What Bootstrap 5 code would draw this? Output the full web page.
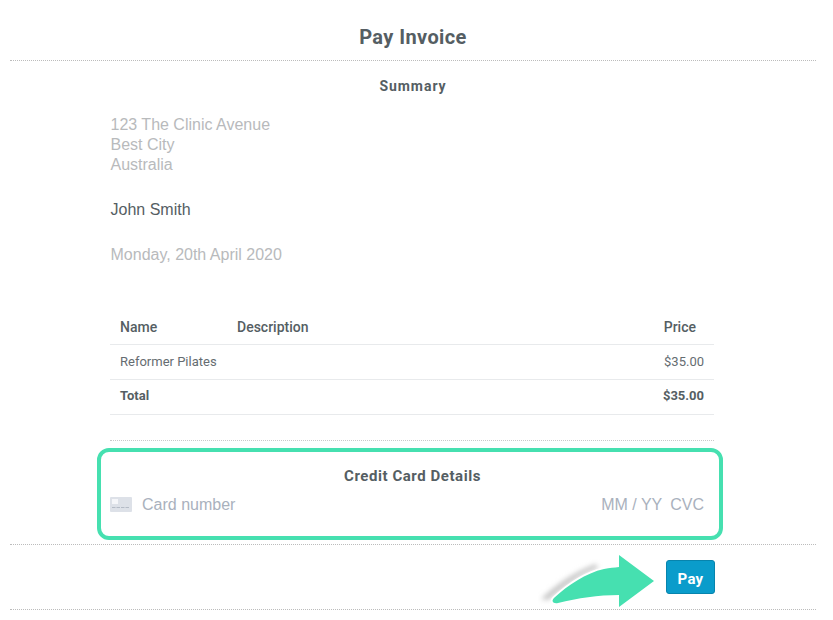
<!DOCTYPE html>
<html lang="en">
<head>
<meta charset="utf-8">
<title>Pay Invoice</title>
<link href="https://cdn.jsdelivr.net/npm/bootstrap@5.3.0/dist/css/bootstrap.min.css" rel="stylesheet">
<style>
html,body{height:620px;overflow:hidden;background:#fff}
body{font-family:"Liberation Sans",Arial,sans-serif;color:#555e63}
.pg{margin:0 17px 0 10px;position:relative;height:620px}
.pg-title{font-family:Roboto,sans-serif;font-weight:700;font-size:20px;line-height:24px;letter-spacing:.4px;text-align:center;color:#555e63;padding-top:25px;height:60px;margin:0}
.dots{border-bottom:1px dotted #bcbcbc;height:1px}
.sum-title{font-family:Roboto,sans-serif;font-weight:700;font-size:14px;line-height:18px;letter-spacing:.95px;text-align:center;margin:0;padding-top:16px;height:54px;color:#555e63}
.inner{margin:0 102px 0 100px}
.addr{font-size:16px;line-height:20px;color:#b8babc;margin:0;padding-left:.5px}
.who{font-size:16px;line-height:20px;color:#555e63;margin:25px 0;padding-left:.5px}
.tbl-wrap{margin-top:44px}
.inv{font-family:Roboto,sans-serif;font-size:13px;width:100%;color:#656c71;margin:0}
.inv th,.inv td{height:35px;padding:0 10px;border-bottom:1px solid #e8eaec;vertical-align:middle;line-height:16px}
.inv th{font-weight:500;font-size:14px;color:#555e63}
.inv .c-name{width:117px}
.inv thead th{padding-top:2px}
.inv .tot td{font-weight:700;font-size:13px;color:#555e63;padding-bottom:1px}
.inv .pr{text-align:right}
.inv thead .pr{padding-right:18px}
.rule-in{border-bottom:1px dotted #cacaca;height:1px;margin-top:25px}
.cc-box{border:4px solid #46e0b0;border-radius:12px;height:92px;margin:7px 93px 4px 87px;padding:15px 15px 0 9px}
.cc-title{font-family:Roboto,sans-serif;font-weight:700;font-size:15px;line-height:18px;letter-spacing:.55px;text-align:center;color:#555e63;margin:0 0 9px;padding-left:11px}
.cc-row{font-size:16px;line-height:22px;color:#a9b1bd}
.cc-ico{width:22px;height:15px;display:block}
.num{margin-left:2px}
.pay-row{height:64px;padding-right:101px}
.pay-btn{font-family:Roboto,sans-serif;font-weight:700;font-size:15px;letter-spacing:.3px;line-height:16px;color:#fff;background:#0a9ccb;border:1px solid #0784ad;border-radius:3px;width:49px;height:34px;padding:4px 0 0}
.pay-btn:hover{background:#0a9ccb;color:#fff;border-color:#0784ad}
.arrow{position:absolute;left:528px;top:553px;width:120px;height:56px}
</style>
</head>
<body>
<div class="pg">
  <h1 class="pg-title">Pay Invoice</h1>
  <div class="dots"></div>
  <h2 class="sum-title">Summary</h2>
  <div class="inner">
    <p class="addr">123 The Clinic Avenue<br>Best City<br>Australia</p>
    <p class="who">John Smith</p>
    <p class="addr">Monday, 20th April 2020</p>
    <div class="tbl-wrap">
      <table class="inv">
        <thead><tr><th class="c-name">Name</th><th>Description</th><th class="pr">Price</th></tr></thead>
        <tbody>
          <tr><td>Reformer Pilates</td><td></td><td class="pr">$35.00</td></tr>
          <tr class="tot"><td>Total</td><td></td><td class="pr">$35.00</td></tr>
        </tbody>
      </table>
    </div>
    <div class="rule-in"></div>
  </div>
  <div class="cc-box">
    <h3 class="cc-title">Credit Card Details</h3>
    <div class="cc-row d-flex align-items-center">
      <svg class="cc-ico me-2" viewBox="0 0 22 15" aria-hidden="true"><rect width="22" height="15" rx="1" fill="#dde1e8"/><rect x="2" y="2" width="6" height="5" fill="#f5f6f9"/><path d="M2 10.500h18" stroke="#b4bbc6" stroke-width="1.200" stroke-dasharray="3.500 1"/></svg>
      <span class="num flex-grow-1">Card number</span>
      <span>MM / YY</span><span class="ms-2">CVC</span>
    </div>
  </div>
  <div class="dots"></div>
  <div class="pay-row d-flex justify-content-end align-items-center">
    <button type="button" class="btn pay-btn">Pay</button>
  </div>
  <div class="dots"></div>
  <svg class="arrow" viewBox="0 0 120 56" aria-hidden="true">
    <defs><filter id="blr" x="-30%" y="-60%" width="160%" height="220%"><feGaussianBlur stdDeviation="2.600"/></filter></defs>
    <path d="M3 46C18 32 35 19 58 11L60 15C40 22 25 35 10 47Z" fill="#c6c6c6" filter="url(#blr)"/>
    <path d="M16 45C30 32 48 20 66 16 72 15 76 14.500 81 14V2L116 28 81 54V42C60 42 40 45 20 50 15 51 13 48 16 45Z" fill="#46e0b0" stroke="#fff" stroke-width="3.500" paint-order="stroke"/>
  </svg>
</div>
<script src="https://cdn.jsdelivr.net/npm/bootstrap@5.3.0/dist/js/bootstrap.bundle.min.js"></script>
</body>
</html>
